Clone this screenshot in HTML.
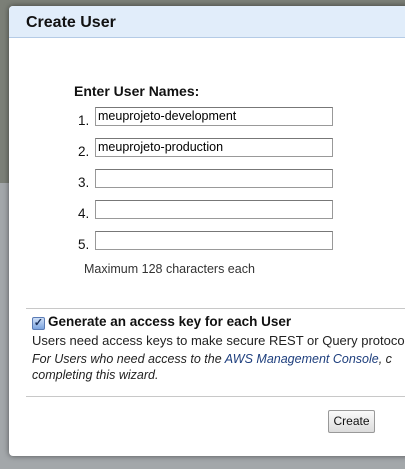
<!DOCTYPE html>
<html><head><style>
body{margin:0;width:405px;height:469px;overflow:hidden;background:#8a8d87;font-family:"Liberation Sans",sans-serif;position:relative}
.bg1{position:absolute;left:0;top:0;width:405px;height:183px;background:#7b7f77}
.bg2{position:absolute;left:0;top:183px;width:405px;height:286px;background:#a3a7aa}
.dlg{position:absolute;left:9px;top:6px;width:410px;height:450px;background:#fff;border-radius:4px;box-shadow:0 0 6px rgba(0,0,0,.5)}
.hd{height:31px;background:#e1edfa;border-bottom:1px solid #b4cbe6;border-radius:4px 0 0 0}
.hd b{position:absolute;left:17px;top:8px;font-size:16px;color:#111}
.t{position:absolute;font-size:13px;color:#111}
.in{position:absolute;left:86px;width:234px;height:17px;border:1px solid #999;border-top-color:#777;font-size:12.5px;line-height:17px;padding-left:2px;box-sizing:content-box}
.n{position:absolute;left:69px;font-size:13.5px;color:#111}
.hr{position:absolute;left:17px;width:400px;height:1px;background:#c8c8c8}
.btn{position:absolute;left:319px;top:404px;width:45px;height:21px;border:1px solid #999;border-radius:2px;background:linear-gradient(#fafafa,#dcdcdc);font-size:12px;text-align:center;line-height:21px;color:#111}
</style></head><body>
<div class="bg1"></div><div class="bg2"></div>
<div class="dlg">
<div class="hd"><b>Create User</b></div>
<div class="t" style="left:65px;top:77px;font-weight:bold;font-size:14px">Enter User Names:</div>
<div class="n" style="top:107px">1.</div><div class="in" style="top:101px">meuprojeto-development</div>
<div class="n" style="top:138px">2.</div><div class="in" style="top:132px">meuprojeto-production</div>
<div class="n" style="top:169px">3.</div><div class="in" style="top:163px"></div>
<div class="n" style="top:200px">4.</div><div class="in" style="top:194px"></div>
<div class="n" style="top:231px">5.</div><div class="in" style="top:225px"></div>
<div class="t" style="left:75px;top:256px;font-size:12.5px;color:#333">Maximum 128 characters each</div>
<div class="hr" style="top:302px"></div>
<div style="position:absolute;left:23px;top:311px;width:11px;height:11px;border:1px solid #5a7bb5;border-radius:2px;background:linear-gradient(#cfe0f7,#7ba4e0);font-size:11px;line-height:11px;text-align:center;color:#1a2f5a;font-weight:bold">✓</div>
<div class="t" style="left:39px;top:308px;font-weight:bold;font-size:13.5px">Generate an access key for each User</div>
<div class="t" style="left:23px;top:327px;white-space:nowrap;color:#222">Users need access keys to make secure REST or Query protocol</div>
<div class="t" style="left:23px;top:345px;white-space:nowrap;font-style:italic;font-size:12.5px;color:#222;line-height:16px">For Users who need access to the <span style="color:#1d3e7d">AWS Management Console</span>, c<br>completing this wizard.</div>
<div class="hr" style="top:390px"></div>
<div class="btn">Create</div>
</div>
</body></html>
